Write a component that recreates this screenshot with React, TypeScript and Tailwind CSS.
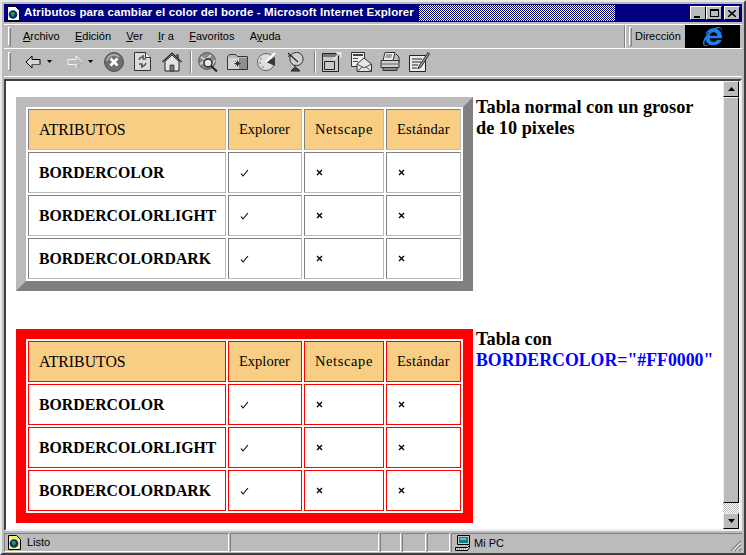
import React from 'react';
import { FaInternetExplorer } from 'react-icons/fa';

const sans = "font-['Liberation_Sans',Arial,sans-serif]";
const serif = "font-['Liberation_Serif','Times_New_Roman',serif]";

const rows = ['BORDERCOLOR', 'BORDERCOLORLIGHT', 'BORDERCOLORDARK'];
const menus = [
  ['A', 'rchivo'],
  ['E', 'dición'],
  ['V', 'er'],
  ['I', 'r a'],
  ['F', 'avoritos'],
  ['A', 'y', 'uda'],
];

const Grip = () => <div className="w-[3px] h-[19px] border-l border-t border-white border-r border-b border-r-[#808080] border-b-[#808080] shrink-0" />;

const Sep = () => <div className="w-[2px] h-[22px] border-l border-l-[#808080] border-r border-r-white shrink-0" />;

const Drop = ({ w = 5 }: { w?: number }) => (
  <svg width={w} height="3" viewBox="0 0 5 3" className="shrink-0"><path d="M0 0h5L2.5 3z" fill="#000" /></svg>
);

const Back = () => (
  <svg width="16" height="14" viewBox="0 0 16 14" className="shrink-0">
    <path d="M7 1 1 7l6 6V9.5h8v-5H7z" fill="#d8d8d8" stroke="#000" strokeWidth="1" />
    <path d="M7 9.5h8" stroke="#555" />
  </svg>
);
const Forward = () => (
  <svg width="17" height="14" viewBox="0 0 17 14" className="shrink-0">
    <path d="M9 1l6.5 6L9 13V9.5H1v-5h8z" fill="none" stroke="#f4f4f4" strokeWidth="1" />
    <path d="M10 12.5 15.5 7" stroke="#8a8a8a" />
  </svg>
);
const Stop = () => (
  <svg width="20" height="20" viewBox="0 0 20 20" className="shrink-0">
    <circle cx="10" cy="10" r="9.4" fill="#6f6f6f" stroke="#4a4a4a" />
    <path d="M3 9a7 7 0 0 1 12-4" stroke="#a8a8a8" strokeWidth="2" fill="none" />
    <path d="M6.5 6.500l7 7m0-7l-7 7" stroke="#fff" strokeWidth="2.6" />
  </svg>
);
const Refresh = () => (
  <svg width="17" height="19" viewBox="0 0 17 19" className="shrink-0">
    <path d="M.5.5h11l5 5v13H.5z" fill="#dcdcdc" stroke="#333" />
    <path d="M11.500.5v5h5" fill="#fff" stroke="#333" />
    <path d="M5 8a4 4 0 0 1 5-3M9 3v4h3M12 11a4 4 0 0 1-5 3M8 16v-4H5" fill="none" stroke="#555" strokeWidth="1.4" />
  </svg>
);
const Home = () => (
  <svg width="20" height="20" viewBox="0 0 20 20" className="shrink-0">
    <path d="M3 9.500V19h14V9.500L10 3z" fill="#e4e4e4" stroke="#222" />
    <path d="M.5 10 10 1l9.500 9M14 3h2v4" fill="none" stroke="#222" strokeWidth="1.2" />
    <path d="M8 13h4v6H8z" fill="#777" stroke="#222" strokeWidth=".7" />
  </svg>
);
const Search = () => (
  <svg width="21" height="20" viewBox="0 0 21 20" className="shrink-0">
    <circle cx="9" cy="9" r="8.4" fill="#8a8a8a" stroke="#555" />
    <path d="M3 5l5 3 5-5M2 12l4-2M14 13l3-5" stroke="#cfcfcf" strokeWidth="2" fill="none" />
    <circle cx="10" cy="11" r="4" fill="#e8e8e8" stroke="#222" strokeWidth="1.4" />
    <path d="M13 14l6 5.500" stroke="#222" strokeWidth="2" />
  </svg>
);
const Folder = () => (
  <svg width="21" height="17" viewBox="0 0 21 17" className="shrink-0">
    <path d="M.5 16.500v-13l2-2h6l2 2h10v13z" fill="#b8b8b8" stroke="#333" />
    <path d="M1 5h19v11H1z" fill="#d4d4d4" />
    <path d="M12 5h8v11h-8z" fill="#8e8e8e" />
    <path d="M10.500 7.500v6m-3-3h6m-5-2 4 4m0-4-4 4" stroke="#222" strokeWidth=".9" />
  </svg>
);
const History = () => (
  <svg width="21" height="19" viewBox="0 0 21 19" className="shrink-0">
    <circle cx="10" cy="10" r="8.500" fill="#dedede" stroke="#666" />
    <path d="M10 10 19 5v9z" fill="#3a3a3a" />
    <path d="M10 10 19 1" stroke="#fff" strokeWidth="2" />
    <path d="M4 7h2M3 11h2M6 15h2" stroke="#777" strokeWidth="1.2" />
  </svg>
);
const Dish = () => (
  <svg width="17" height="20" viewBox="0 0 17 20" className="shrink-0">
    <circle cx="9.500" cy="7" r="6.600" fill="#cfcfcf" stroke="#333" />
    <path d="M1 1l10 9M3 2.500 1.500 5" stroke="#222" strokeWidth="1.1" />
    <path d="M8 13v3M4 19h9l-3-3H7z" fill="#444" stroke="#222" />
  </svg>
);
const FullScreen = () => (
  <svg width="20" height="20" viewBox="0 0 20 20" className="shrink-0">
    <path d="M.5 1.500h16v18H.5z" fill="#c8c8c8" stroke="#222" />
    <path d="M1 2h15v3H1z" fill="#777" />
    <path d="M2.500 9.500h10v8h-10z" fill="none" stroke="#222" />
    <path d="M11 8l7-7m-4 0h5v5" fill="none" stroke="#eee" strokeWidth="1.3" />
  </svg>
);
const Mail = () => (
  <svg width="21" height="20" viewBox="0 0 21 20" className="shrink-0">
    <path d="M.5.5h13v14H.5z" fill="#eee" stroke="#333" />
    <path d="M2 2h10v2H2zM2 6h5v1H2zM2 9h5v1H2z" fill="#444" />
    <path d="M6 12l7-6 7.500 6v7.500H6z" fill="#e6e6e6" stroke="#333" />
    <path d="M6 12l7 4 7.500-4M6 19.500l6-5M20.500 19.500l-6-5" fill="none" stroke="#555" />
  </svg>
);
const Printer = () => (
  <svg width="20" height="19" viewBox="0 0 20 19" className="shrink-0">
    <path d="M5 .5h10l-2 8H3z" fill="#eee" stroke="#333" />
    <path d="M6 3h6M5.500 5h6" stroke="#555" />
    <path d="M1 8.500h18v7H1z" fill="#cfcfcf" stroke="#333" />
    <path d="M1 12h18" stroke="#666" />
    <path d="M3 15.500h14v3H3z" fill="#888" stroke="#333" />
    <path d="M16 2l3 3v5" stroke="#333" fill="none" />
  </svg>
);
const Edit = () => (
  <svg width="21" height="20" viewBox="0 0 21 20" className="shrink-0">
    <path d="M.5 3.500h16v16H.5z" fill="#ececec" stroke="#222" />
    <path d="M3 7h10M3 10h9M3 13h6M3 16h5" stroke="#222" />
    <path d="M19 .5 10 14l-1 3 3-2L20.500 2z" fill="#999" stroke="#222" strokeWidth=".9" />
  </svg>
);

const PageIcon = ({ dotted }: { dotted?: boolean }) => (
  <svg width="13" height="15" viewBox="0 0 13 15" className="shrink-0">
    <path d="M.5.5h8l4 4v10H.5z" fill={dotted ? '#f4f080' : '#fff'} stroke="#000" />
    <circle cx="6" cy="8.500" r="4.300" fill="#0a2f7a" />
    <path d="M4 6h3l1 2-2 3-2-2z" fill="#1f9e4a" />
  </svg>
);

const Computer = () => (
  <svg width="16" height="16" viewBox="0 0 16 16" className="shrink-0">
    <path d="M2.500.5h12v9h-12z" fill="#c8c8c8" stroke="#000" />
    <path d="M4 2h9v6H4z" fill="#0a7f80" />
    <path d="M5 3h6v2H5z" fill="#6fb0e0" />
    <path d="M.5 12.500h12l2-2v2l-2 3H.5z" fill="#e0e0e0" stroke="#000" />
    <path d="M2 14h9" stroke="#555" strokeDasharray="1 1" />
  </svg>
);

const WinBtn = ({ children, last }: { children: React.ReactNode; last?: boolean }) => (
  <div className={`w-[16px] h-[14px] bg-[#bbb] border border-t-white border-l-white border-r-black border-b-black flex items-center justify-center ${last ? 'ml-[2px]' : ''}`}>
    {children}
  </div>
);

const ScrollBtn = ({ up }: { up?: boolean }) => (
  <div className="w-[16px] h-[16px] bg-[#bbb] border border-t-[#eee] border-l-[#eee] border-r-black border-b-black flex items-center justify-center shrink-0">
    <svg width="7" height="4" viewBox="0 0 7 4"><path d={up ? 'M3.500 0 7 4H0z' : 'M0 0h7L3.500 4z'} fill="#000" /></svg>
  </div>
);

const Cell = ({ children, w, light, red, head }: { children?: React.ReactNode; w?: string; light?: boolean; red?: boolean; head?: boolean }) => (
  <td
    className={`${w ?? ''} h-[41px] border p-0 pl-[10px] align-middle text-black ${head ? 'bg-[#f8ce85] text-[14.5px] font-normal' : 'bg-white text-[15.8px] font-bold'} ${
      red ? 'border-[#ff0000]' : 'border-t-[#808080] border-l-[#808080] border-r-[#bbb] border-b-[#bbb]'
    } ${light ? 'pl-[11px]' : ''}`}
  >
    {children}
  </td>
);

const Check = () => (
  <svg width="9" height="8" viewBox="0 0 9 8" className="block"><path d="M1 4.500 3 7l5-6" fill="none" stroke="#000" strokeWidth="1.100" /></svg>
);
const Cross = () => (
  <svg width="7" height="7" viewBox="0 0 7 7" className="block"><path d="M1 1l5 5m0-5L1 6" fill="none" stroke="#000" strokeWidth="1.300" /></svg>
);

const AttrTable = ({ red }: { red?: boolean }) => (
  <table
    className={`w-[457px] h-[194px] table-fixed border-separate border-spacing-[2px] border-[10px] shrink-0 ${serif} ${
      red ? 'border-[#ff0000]' : 'border-t-[#bbb] border-l-[#bbb] border-r-[#808080] border-b-[#808080]'
    }`}
  >
    <tbody>
      <tr>
        <Cell head red={red} w="w-[198px]"><span className="text-[15.8px]">ATRIBUTOS</span></Cell>
        <Cell head red={red} w="w-[74px]">Explorer</Cell>
        <Cell head red={red} w="w-[80px]"><span className="tracking-[0.6px]">Netscape</span></Cell>
        <Cell head red={red}><span className="tracking-[0.25px]">Estándar</span></Cell>
      </tr>
      {rows.map((r) => (
        <tr key={r}>
          <Cell red={red}>{r}</Cell>
          <Cell red={red} light><Check /></Cell>
          <Cell red={red} light><Cross /></Cell>
          <Cell red={red} light><Cross /></Cell>
        </tr>
      ))}
    </tbody>
  </table>
);

export default function App() {
  return (
    <div className={`w-[746px] h-[555px] bg-[#bbb] flex flex-col overflow-hidden border-2 border-t-[#e8e8e8] border-l-[#e8e8e8] border-r-[#404040] border-b-[#404040] p-[2px] pb-[1px] ${sans}`}>
      {/* title bar */}
      <div className="h-[18px] bg-[#000080] flex items-center shrink-0 pl-[3px] pr-[2px]">
        <PageIcon />
        <span className="ml-[4px] text-white font-bold text-[11.5px] tracking-[0.11px] whitespace-nowrap w-[393px]">
          Atributos para cambiar el color del borde - Microsoft Internet Explorer
        </span>
        <div className="w-[196px] h-[16px] ml-[2px] bg-[image:repeating-conic-gradient(#fff_0_25%,#000080_0_50%)] bg-[length:2px_2px]" />
        <div className="ml-auto flex items-center">
          <WinBtn><div className="w-[6px] h-[2px] bg-black mt-[7px] mr-[2px]" /></WinBtn>
          <WinBtn><div className="w-[9px] h-[8px] border border-t-2 border-black" /></WinBtn>
          <WinBtn last>
            <svg width="8" height="7" viewBox="0 0 8 7"><path d="M0 0l8 7m0-7L0 7" stroke="#000" strokeWidth="1.500" /></svg>
          </WinBtn>
        </div>
      </div>

      {/* menu bar */}
      <div className="h-[25px] mt-[2px] flex items-stretch border-t border-t-white border-b border-b-white shrink-0">
        <div className="flex-1 flex items-center pl-[4px] border-r border-r-[#808080]">
          <Grip />
          <div className="flex items-center gap-[15.25px] ml-[12px] text-[11px] text-black">
            {menus.map((m) => (
              <span key={m.join('')} className="whitespace-nowrap">
                {m.length === 2 ? (
                  <><span className="underline">{m[0]}</span>{m[1]}</>
                ) : (
                  <>{m[0]}<span className="underline">{m[1]}</span>{m[2]}</>
                )}
              </span>
            ))}
          </div>
        </div>
        <div className="w-[60px] flex items-center pl-[3px] border-l border-l-white shrink-0">
          <Grip />
          <span className="ml-[3px] text-[11px] text-black whitespace-nowrap">Dirección</span>
        </div>
        <div className="w-[55px] mr-[2px] bg-black flex items-center justify-center shrink-0">
          <FaInternetExplorer className="text-[#1a80ee] w-[19px] h-[19px]" />
        </div>
      </div>

      {/* toolbar */}
      <div className="h-[28px] flex items-center pl-[4px] pb-[2px] border-b border-b-white shrink-0">
        <Grip />
        <div className="ml-[14px] flex items-center">
          <Back />
          <div className="ml-[6px]"><Drop /></div>
          <div className="ml-[15px]"><Forward /></div>
          <div className="ml-[4px]"><Drop /></div>
          <div className="ml-[11px]"><Stop /></div>
          <div className="ml-[10px]"><Refresh /></div>
          <div className="ml-[11px]"><Home /></div>
          <div className="ml-[8px]"><Sep /></div>
          <div className="ml-[6px]"><Search /></div>
          <div className="ml-[8px]"><Folder /></div>
          <div className="ml-[8px]"><History /></div>
          <div className="ml-[10px]"><Dish /></div>
          <div className="ml-[10px]"><Sep /></div>
          <div className="ml-[6px]"><FullScreen /></div>
          <div className="ml-[9px]"><Mail /></div>
          <div className="ml-[8px]"><Printer /></div>
          <div className="ml-[9px]"><Edit /></div>
        </div>
      </div>

      {/* page */}
      <div className="mt-[2px] flex-1 min-h-0 flex border-2 border-t-[#404040] border-l-[#404040] border-r-[#eee] border-b-[#eee] bg-white">
        <div className="flex-1 min-w-0 pl-[10px] pt-[16px] flex flex-col gap-[38px]">
          <div className="flex items-start gap-[3px]">
            <AttrTable />
            <p className={`${serif} font-bold text-[18.3px] leading-[21px] text-black w-[240px]`}>
              Tabla normal con un grosor<br />de 10 pixeles
            </p>
          </div>
          <div className="flex items-start gap-[3px]">
            <AttrTable red />
            <p className={`${serif} font-bold text-[18.3px] leading-[21px] text-black w-[245px]`}>
              Tabla con<br />
              <span className="text-[#0000ff] text-[17.8px]">BORDERCOLOR="#FF0000"</span>
            </p>
          </div>
        </div>
        {/* scrollbar */}
        <div className="w-[16px] flex flex-col shrink-0 mr-[1px]">
          <ScrollBtn up />
          <div className="h-[406px] bg-[#bbb] border border-t-[#eee] border-l-[#eee] border-r-black border-b-black shrink-0" />
          <div className="flex-1 bg-[image:repeating-conic-gradient(#fff_0_25%,#bbb_0_50%)] bg-[length:2px_2px]" />
          <ScrollBtn />
        </div>
      </div>

      {/* status bar */}
      <div className="h-[19px] mt-[2px] flex items-stretch shrink-0 text-[11px] text-black">
        <div className="w-[225px] flex items-center pl-[3px] border border-t-[#808080] border-l-[#808080] border-r-white border-b-white shrink-0">
          <PageIcon dotted />
          <span className="ml-[6px]">Listo</span>
        </div>
        <div className="w-[149px] ml-[1px] border border-t-[#808080] border-l-[#808080] border-r-white border-b-white shrink-0" />
        <div className="w-[21px] ml-[1px] border border-t-[#808080] border-l-[#808080] border-r-white border-b-white shrink-0" />
        <div className="w-[24px] ml-[1px] border border-t-[#808080] border-l-[#808080] border-r-white border-b-white shrink-0" />
        <div className="w-[23px] ml-[1px] border border-t-[#808080] border-l-[#808080] border-r-white border-b-white shrink-0" />
        <div className="flex-1 ml-[1px] relative flex items-center pl-[3px] border-t border-l border-t-[#808080] border-l-[#808080]">
          <Computer />
          <span className="ml-[3px]">Mi PC</span>
          <svg width="12" height="12" viewBox="0 0 12 12" className="absolute right-0 bottom-0">
            <path d="M11 1 1 11M11 5l-6 6M11 9l-2 2" stroke="#808080" strokeWidth="1.200" />
            <path d="M11 2.500 2.500 11M11 6.500 6.500 11" stroke="#fff" />
          </svg>
        </div>
      </div>
    </div>
  );
}
